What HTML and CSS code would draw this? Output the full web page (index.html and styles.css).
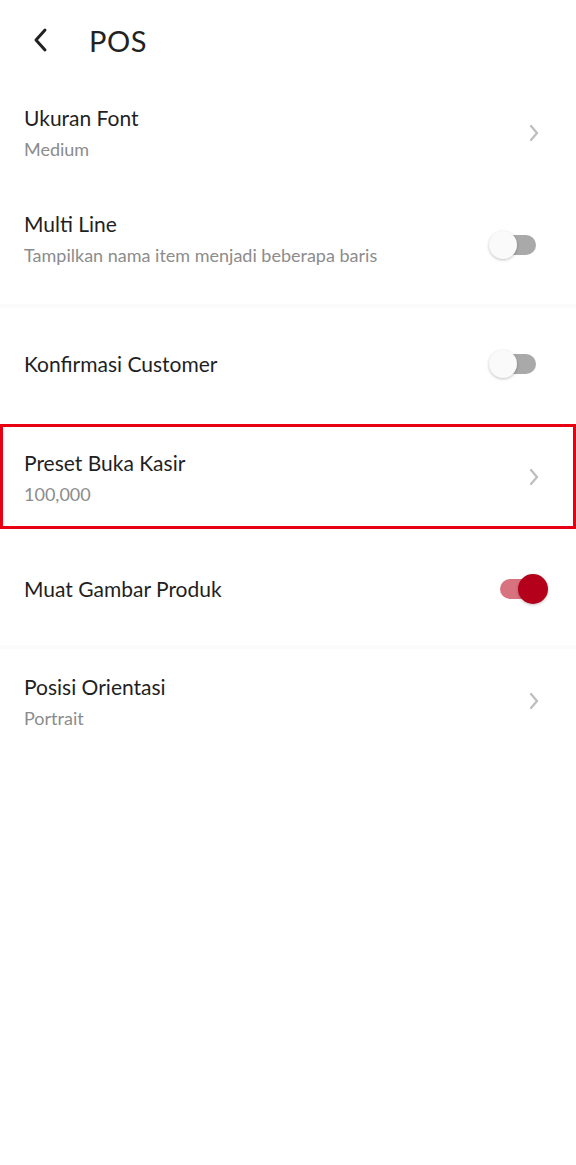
FILE: index.html
```html
<!DOCTYPE html>
<html lang="id">
<head>
    <meta charset="UTF-8">
    <meta name="viewport" content="width=device-width, initial-scale=1.0">
    <title>POS</title>
    <link rel="stylesheet" href="styles.css">
</head>
<body>

    <div class="header">
        <svg class="back" width="20" height="28" viewBox="0 0 20 28">
            <path d="M13 4 L4 14 L13 24" fill="none" stroke="#222" stroke-width="3" stroke-linecap="round" stroke-linejoin="round"/>
        </svg>
        <h1>POS</h1>
    </div>

    <div class="row row-font">
        <div class="text">
            <div class="title">Ukuran Font</div>
            <div class="sub">Medium</div>
        </div>
        <svg class="chev" width="12" height="18" viewBox="0 0 12 18">
            <path d="M3 2 L9 9 L3 16" fill="none" stroke="#bdbdbd" stroke-width="2.2" stroke-linecap="round" stroke-linejoin="round"/>
        </svg>
    </div>

    <div class="row row-multi">
        <div class="text">
            <div class="title">Multi Line</div>
            <div class="sub">Tampilkan nama item menjadi beberapa baris</div>
        </div>
        <div class="switch switch-down"><span class="thumb"></span></div>
    </div>

    <div class="divider"></div>

    <div class="row row-single row-confirm">
        <div class="text">
            <div class="title">Konfirmasi Customer</div>
        </div>
        <div class="switch"><span class="thumb"></span></div>
    </div>

    <div class="row row-marked">
        <div class="text">
            <div class="title">Preset Buka Kasir</div>
            <div class="sub">100,000</div>
        </div>
        <svg class="chev" width="12" height="18" viewBox="0 0 12 18">
            <path d="M3 2 L9 9 L3 16" fill="none" stroke="#bdbdbd" stroke-width="2.2" stroke-linecap="round" stroke-linejoin="round"/>
        </svg>
    </div>

    <div class="row row-single row-image">
        <div class="text">
            <div class="title">Muat Gambar Produk</div>
        </div>
        <div class="switch on"><span class="thumb"></span></div>
    </div>

    <div class="divider"></div>

    <div class="row row-last">
        <div class="text">
            <div class="title">Posisi Orientasi</div>
            <div class="sub">Portrait</div>
        </div>
        <svg class="chev" width="12" height="18" viewBox="0 0 12 18">
            <path d="M3 2 L9 9 L3 16" fill="none" stroke="#bdbdbd" stroke-width="2.2" stroke-linecap="round" stroke-linejoin="round"/>
        </svg>
    </div>

</body>
</html>
```

FILE: styles.css
```css
* {
    margin: 0;
    padding: 0;
    box-sizing: border-box;
}
body {
    font-family: Lato, "Noto Sans", sans-serif;
    background-color: #fff;
    color: #222;
    width: 576px;
}
.header {
    height: 80px;
    display: flex;
    align-items: center;
    padding-left: 32px;
}
.back {
    display: block;
    margin-top: -1px;
}
.header h1 {
    font-size: 29px;
    font-weight: 400;
    color: #222;
    margin-left: 37px;
    letter-spacing: 0.5px;
}
.row {
    display: flex;
    align-items: center;
    justify-content: space-between;
    padding-left: 24px;
    padding-right: 36px;
}
.row-font {
    height: 106px;
    padding-bottom: 1px;
}
.row-multi {
    height: 118px;
    padding-bottom: 14px;
}
.row-single {
    height: 116px;
}
.row-confirm {
    padding-bottom: 4px;
}
.row-image {
    padding-top: 3px;
}
.row-marked {
    height: 105px;
    border: 3px solid #e60012;
    padding-left: 21px;
    padding-right: 33px;
    padding-top: 1px;
}
.row-last {
    height: 101px;
    padding-top: 3px;
}
.title {
    font-size: 21px;
    line-height: 26px;
    color: #1f1f1f;
}
.sub {
    font-size: 18px;
    line-height: 22px;
    color: #8c8c8c;
    margin-top: 7px;
}
.chev {
    display: block;
}
.divider {
    height: 4px;
    background-color: #fbfbfb;
}
.switch {
    position: relative;
    width: 48px;
    height: 30px;
    margin-right: 3px;
}
.switch-down {
    margin-top: 14px;
}
.switch::before {
    content: "";
    position: absolute;
    left: 10px;
    right: 1px;
    top: 5px;
    height: 20px;
    border-radius: 10px;
    background-color: #a9a9a9;
}
.thumb {
    position: absolute;
    left: 0;
    top: 1px;
    width: 28px;
    height: 28px;
    border-radius: 50%;
    background-color: #fafafa;
    box-shadow: 0 1px 3px rgba(0, 0, 0, 0.25);
}
.switch.on {
    margin-right: -8px;
}
.switch.on::before {
    left: 0;
    right: 10px;
    background-color: #d9727f;
}
.switch.on .thumb {
    left: auto;
    right: 0;
    background-color: #b4001a;
    width: 30px;
    height: 30px;
    top: 0;
}
```
